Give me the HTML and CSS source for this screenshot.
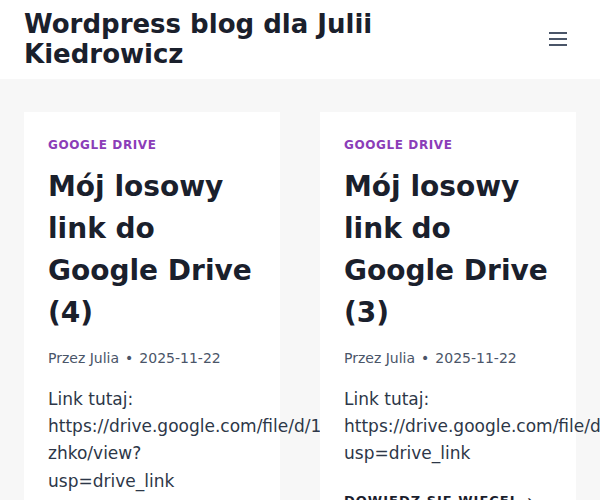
FILE: index.html
```html
<!DOCTYPE html>
<html lang="pl">
  <head>
    <meta charset="UTF-8" />
    <meta name="viewport" content="width=device-width, initial-scale=1.0" />
    <title>Wordpress blog dla Julii Kiedrowicz</title>
    <link rel="stylesheet" href="styles.css">
  </head>
  <body>
    <header class="site-header">
      <div class="site-branding">
        <p class="site-title">Wordpress blog dla Julii Kiedrowicz</p>
      </div>
      <button class="menu-toggle" aria-label="Menu">
        <svg viewBox="0 0 24 24" width="24" height="24">
          <path d="M3 6h18M3 12h18M3 18h18" stroke="currentColor" stroke-width="2" fill="none" />
        </svg>
      </button>
    </header>

    <main class="posts">
      <article class="post-card">
        <div class="post-category">Google Drive</div>
        <h2 class="post-title">Mój losowy link do Google Drive (4)</h2>
        <div class="post-meta">
          <span>Przez Julia</span>
          <span class="dot">•</span>
          <span>2025-11-22</span>
        </div>
        <p class="post-excerpt">Link tutaj: https://drive.google.com/file/d/1Xq8Lr5TnVb2Kc9Wy4Pm-zhko/view?usp=drive_link</p>
        <a class="read-more" href="#">Dowiedz się więcej →</a>
      </article>

      <article class="post-card">
        <div class="post-category">Google Drive</div>
        <h2 class="post-title">Mój losowy link do Google Drive (3)</h2>
        <div class="post-meta">
          <span>Przez Julia</span>
          <span class="dot">•</span>
          <span>2025-11-22</span>
        </div>
        <p class="post-excerpt">Link tutaj: https://drive.google.com/file/d/1Ab3Cd4Ef5Gh6Ij7Kl8Mn9Op0Qr/view?usp=drive_link</p>
        <a class="read-more" href="#">Dowiedz się więcej →</a>
      </article>
    </main>
  </body>
</html>
```

FILE: styles.css
```css
body {
  font-family: "DejaVu Sans", Verdana, sans-serif;
  margin: 0;
  background-color: #f7f7f7;
  color: #2d3748;
}
.site-header {
  background: white;
  display: flex;
  align-items: center;
  justify-content: space-between;
  padding: 9px 24px 10px;
}
.site-branding {
  max-width: 400px;
}
.site-title {
  margin: 0;
  font-size: 26px;
  line-height: 30px;
  font-weight: bold;
  color: #1a202c;
}
.menu-toggle {
  background: none;
  border: none;
  padding: 6px;
  color: #4a5568;
  display: flex;
  cursor: pointer;
}
.posts {
  display: grid;
  grid-template-columns: 1fr 1fr;
  gap: 40px;
  padding: 33px 24px 24px;
}
.post-card {
  background: white;
  padding: 24px;
  min-width: 0;
}
.post-category {
  font-size: 12px;
  line-height: 18px;
  font-weight: bold;
  text-transform: uppercase;
  letter-spacing: 0.6px;
  color: #8b3db8;
}
.post-title {
  margin: 12px 0 14px;
  font-size: 28px;
  line-height: 42px;
  font-weight: bold;
  color: #1a202c;
}
.post-meta {
  font-size: 14px;
  line-height: 21px;
  color: #4a5568;
  display: flex;
  gap: 6px;
}
.post-excerpt {
  margin: 17px 0 22px;
  font-size: 17px;
  line-height: 1.6;
}
.read-more {
  font-size: 13px;
  font-weight: bold;
  text-transform: uppercase;
  letter-spacing: 1px;
  color: #1a202c;
  text-decoration: none;
}
```
